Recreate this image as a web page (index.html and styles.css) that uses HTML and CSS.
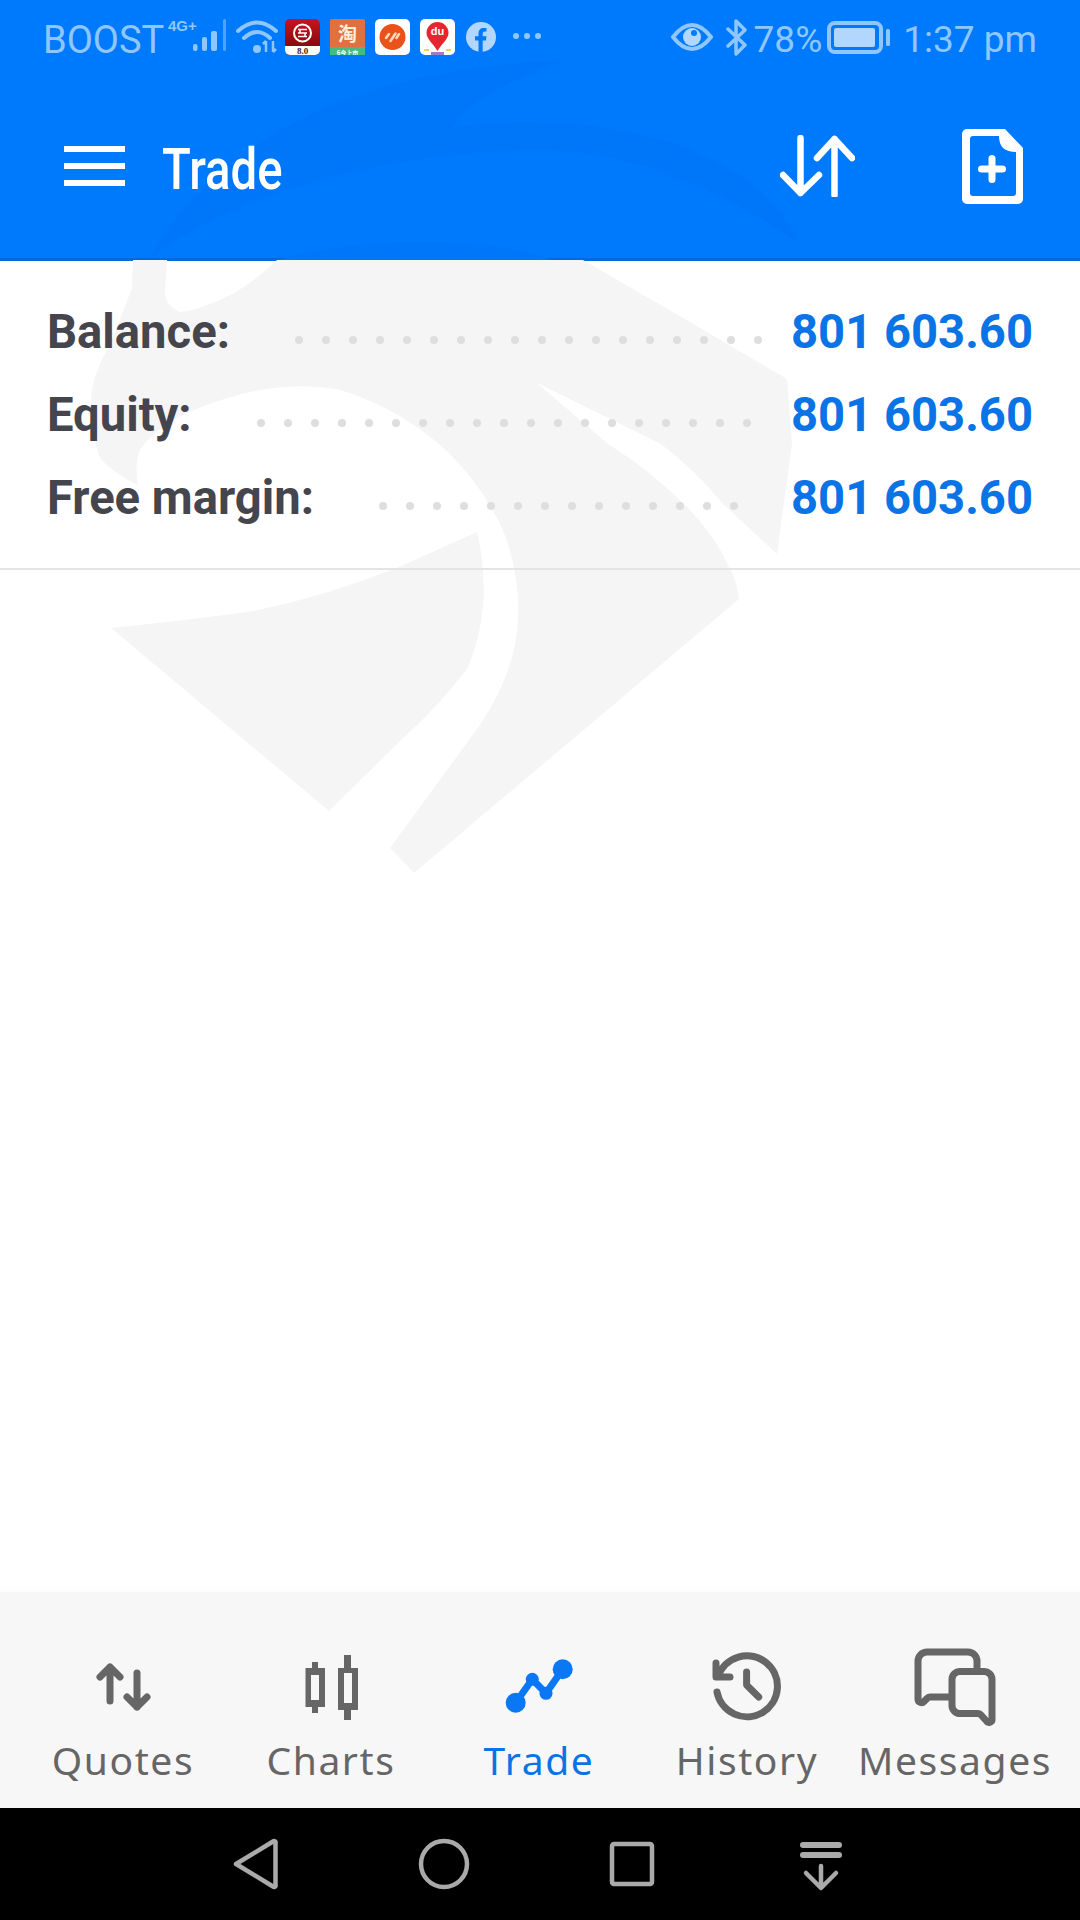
FILE: index.html
```html
<!DOCTYPE html>
<html lang="en">
<head>
<meta charset="utf-8">
<title>Trade</title>
<link rel="stylesheet" href="styles.css">
</head>
<body>
<div class="screen">
  <header class="header">
    <svg class="hdr-mark" viewBox="0 0 1080 260" aria-hidden="true">
      <path d="M150 258C190 180 290 105 420 78C470 68 520 60 560 62C500 85 465 105 452 128C560 112 690 130 760 190C780 210 795 230 800 245C740 200 640 150 540 150C400 150 240 190 150 258Z"/>
      <path d="M280 260C340 240 480 232 550 260Z"/>
    </svg>
    <div class="status">
      <div class="status-left">
        <span class="st-text st-boost">BOOST</span>
        <svg class="st-signal" viewBox="0 0 66 40">
          <text class="st-4g" x="3" y="16">4G+</text>
          <rect class="st-fill" x="28" y="29" width="4.500" height="7" rx="2"/>
          <rect class="st-fill" x="37" y="22" width="5" height="14" rx="2"/>
          <rect class="st-fill" x="46" y="16" width="6" height="20" rx="2"/>
          <rect class="st-faint" x="58" y="4" width="3" height="32" rx="1.500"/>
        </svg>
        <svg class="st-wifi" viewBox="0 0 41 33">
          <path class="st-line" d="M1 11Q20-6 39 11M7 18Q20 6 33 18"/>
          <circle class="st-fill" cx="20" cy="29" r="4"/>
          <path class="st-thin" d="M29 21v11M26 24l3-3M36 21v11M39 29l-3 3"/>
        </svg>
        <svg class="app" viewBox="0 0 35 36">
          <defs><linearGradient id="redg" x1="0" y1="0" x2="0" y2="1"><stop offset="0" stop-color="#c8141e"/><stop offset="1" stop-color="#74050a"/></linearGradient></defs>
          <rect width="35" height="36" rx="5" fill="url(#redg)"/>
          <path class="app-white" d="M0 27H35V31a5 5 0 0 1-5 5H5a5 5 0 0 1-5-5Z"/>
          <circle class="app-ring" cx="17.500" cy="14" r="8.500"/>
          <path class="app-ring-thin" d="M13 10.500h9M13 14h9M13 17.500h9M15 10.500v3.500M20 14v3.500"/>
          <text class="app-80" x="17.500" y="35">8.0</text>
        </svg>
        <svg class="app" viewBox="0 0 35 36">
          <rect width="35" height="36" rx="2" fill="#e0703f"/>
          <rect y="28" width="35" height="8" fill="#45bb7c"/>
          <text class="app-tao" x="17.500" y="22">淘</text>
          <text class="app-tao-sub" x="17.500" y="35.500">6今上市</text>
        </svg>
        <svg class="app" viewBox="0 0 35 36">
          <rect width="35" height="36" rx="5" fill="#fff"/>
          <circle cx="17.500" cy="18" r="13" fill="#e9531a"/>
          <path class="app-slash" d="M11 19l3-4M15.500 22l5-7.500M21.500 19l2.500-4"/>
        </svg>
        <svg class="app" viewBox="0 0 35 36">
          <rect width="35" height="36" rx="5" fill="#fff"/>
          <path d="M17.500 3a11 11 0 0 1 11 11c0 6-7 11-11 18c-4-7-11-12-11-18a11 11 0 0 1 11-11Z" fill="#e5262e"/>
          <text class="app-du" x="17.500" y="16">du</text>
          <path d="M11 33h13v3H11Z" fill="#9b7fc0"/>
          <path d="M26 30h5v2h-5ZM4 30h5v2H4Z" fill="#f2d35a"/>
        </svg>
        <svg class="st-fb" viewBox="0 0 30 30">
          <circle class="st-light" cx="15" cy="15" r="15"/>
          <path class="st-cut" d="M12.500 30V18.500H9v-4.200h3.500v-3c0-3.500 2-5.400 5.200-5.400 1.500 0 2.800.2 2.800.2v3.400h-1.600c-1.700 0-2.200 1-2.200 2.100v2.700h3.800l-.6 4.200h-3.200V30Z"/>
        </svg>
        <span class="st-dots"><i></i><i></i><i></i></span>
      </div>
      <div class="status-right">
        <svg class="st-eye" viewBox="0 0 42 28">
          <path class="st-line" d="M2 14C9 5 15 2 21 2s12 3 19 12c-7 9-13 12-19 12S9 23 2 14Z"/>
          <circle class="st-light" cx="21" cy="14" r="9"/>
          <circle class="st-cut" cx="23" cy="10" r="3"/>
        </svg>
        <svg class="st-bt" viewBox="0 0 23 37">
          <path class="st-line-bt" d="M3 10L20 26L11 35V2L20 11L3 27"/>
        </svg>
        <span class="st-text st-pct">78%</span>
        <svg class="st-batt" viewBox="0 0 63 33">
          <rect class="st-line" x="2" y="2" width="52" height="29" rx="6"/>
          <rect class="st-light" x="7" y="7" width="41" height="19" rx="2"/>
          <rect class="st-fill" x="59" y="8" width="4" height="17" rx="1.500"/>
        </svg>
        <span class="st-text st-time">1:37 pm</span>
      </div>
    </div>
    <div class="toolbar">
      <div class="burger"><i></i><i></i><i></i></div>
      <h1 class="title">Trade</h1>
      <div class="tool-actions">
        <svg class="ic-swap" viewBox="0 0 75 62">
          <path d="M20.500 3V58M3 40L20.500 58L39 40M54.500 60V4M37 23L54.500 4L72 23"/>
        </svg>
        <svg class="ic-doc" viewBox="0 0 61 75">
          <path class="doc-body" fill-rule="evenodd" d="M5 0H43L61 19V70a5 5 0 0 1-5 5H5a5 5 0 0 1-5-5V5a5 5 0 0 1 5-5ZM11 7a3 3 0 0 0-3 3V64a3 3 0 0 0 3 3H51a3 3 0 0 0 3-3V23C43 23 37 18 37 7Z"/>
          <path class="doc-plus" d="M30 29.500V50.500M19.500 40H40.500"/>
        </svg>
      </div>
    </div>
  </header>

  <main class="main">
    <svg class="mark" viewBox="0 260 1080 640" aria-hidden="true">
      <path d="M133 260L132 288Q120 320 110 345Q92 375 91 400Q91 435 100 458Q115 475 138 485Q134 465 140 450Q165 412 254 391Q300 382 340 390Q400 408 448 452Q490 495 506 538Q520 580 518 620Q516 670 480 725L390 848L414 873L739 599Q737 580 729 567Q715 535 685 505Q650 470 608 444L537 383L661 444Q695 470 724 505L777 554L792 444L787 379L690 322L583 260L277 260Q250 285 230 295Q200 310 180 312Q165 305 165 292L167 260Z"/>
      <path d="M111 628Q190 620 254 611Q330 595 399 567L477 532Q486 570 483 607Q480 640 467 669Q440 705 399 742L329 811Z"/>
    </svg>
    <section class="summary">
      <div class="row">
        <span class="label">Balance:</span>
        <span class="dots"><i></i><i></i><i></i><i></i><i></i><i></i><i></i><i></i><i></i><i></i><i></i><i></i><i></i><i></i><i></i><i></i><i></i><i></i></span>
        <span class="value">801 603.60</span>
      </div>
      <div class="row">
        <span class="label">Equity:</span>
        <span class="dots"><i></i><i></i><i></i><i></i><i></i><i></i><i></i><i></i><i></i><i></i><i></i><i></i><i></i><i></i><i></i><i></i><i></i><i></i><i></i></span>
        <span class="value">801 603.60</span>
      </div>
      <div class="row">
        <span class="label">Free margin:</span>
        <span class="dots"><i></i><i></i><i></i><i></i><i></i><i></i><i></i><i></i><i></i><i></i><i></i><i></i><i></i><i></i></span>
        <span class="value">801 603.60</span>
      </div>
    </section>
  </main>

  <nav class="tabs">
    <div class="tab">
      <svg class="tab-ic stroke" viewBox="0 0 100 80"><path d="M37 54V20M27 30L37 20L47 30M64 26V60M54 50L64 60L74 50"/></svg>
      <span class="tab-label">Quotes</span>
    </div>
    <div class="tab">
      <svg class="tab-ic solid" viewBox="0 0 100 80"><path fill-rule="evenodd" d="M31 15H37V21H44V60H37V66H31V60H24.500V21H31ZM30 28V53H38V28ZM63 8H70V21H77V63H70V73H63V63H57V21H63ZM63 26V56H71V26Z"/></svg>
      <span class="tab-label">Charts</span>
    </div>
    <div class="tab active">
      <svg class="tab-ic trade" viewBox="0 0 100 80">
        <path class="trade-line" d="M26.700 55.700L43.300 32.300L57 46.300L73.700 22.300"/>
        <circle cx="26.700" cy="55.700" r="10"/><circle cx="43.300" cy="32.300" r="6.500"/><circle cx="57" cy="46.300" r="6.500"/><circle cx="73.700" cy="22.300" r="10"/>
      </svg>
      <span class="tab-label">Trade</span>
    </div>
    <div class="tab">
      <svg class="tab-ic stroke" viewBox="0 0 100 80"><path d="M20 45A30.500 30.500 0 1 0 21 29.700M19 16V30H33M49.600 25V38L61.700 50"/></svg>
      <span class="tab-label">History</span>
    </div>
    <div class="tab">
      <svg class="tab-ic stroke" viewBox="0 0 100 80"><path d="M72 20V14a9 9 0 0 0-9-9H22a9 9 0 0 0-9 9V52a3.500 3.500 0 0 0 6 2.500l3-3a4 4 0 0 1 3-1.500H45M55 24.500H79a8 8 0 0 1 8 8V72a3 3 0 0 1-5.500 2L76 68a4 4 0 0 0-3-1.500H55a8 8 0 0 1-8-8V32.500a8 8 0 0 1 8-8Z"/></svg>
      <span class="tab-label">Messages</span>
    </div>
  </nav>

  <footer class="sysnav">
    <svg class="nav-ic" viewBox="0 0 60 60"><path d="M11 30L48 7.500a1.500 1.500 0 0 1 2.500 1.500V51a1.500 1.500 0 0 1-2.500 1.500Z"/></svg>
    <svg class="nav-ic" viewBox="0 0 60 60"><circle cx="30" cy="30" r="23"/></svg>
    <svg class="nav-ic" viewBox="0 0 60 60"><rect x="10" y="10" width="40" height="40" rx="2"/></svg>
    <svg class="nav-ic" viewBox="0 0 60 60"><path class="nav-bar" d="M12 11H48M12 21H48"/><path d="M30 32V53M15 39L30 54L45 39"/></svg>
  </footer>
</div>
</body>
</html>
```
FILE: styles.css
```css
* { box-sizing: border-box; }
html, body { margin: 0; padding: 0; }
body { font-family: Roboto, "Noto Sans", sans-serif; background: #fff; }

.screen {
  width: 1080px;
  height: 1920px;
  display: flex;
  flex-direction: column;
  overflow: hidden;
  background: #fff;
}

/* Header */
.header {
  position: relative;
  height: 261px;
  flex: none;
  background: #007afc;
  border-bottom: 3px solid #0569d8;
  display: flex;
  flex-direction: column;
}
.hdr-mark {
  position: absolute;
  left: 0;
  top: 0;
  width: 1080px;
  height: 260px;
  fill: #0077f8;
}
.status {
  position: relative;
  height: 74px;
  flex: none;
  display: flex;
  justify-content: space-between;
  align-items: center;
  padding: 0 43px 0 43px;
  color: #8fc7fd;
}
.status-left, .status-right { display: flex; align-items: center; }
.st-text { font-size: 37px; line-height: 40px; color: #8fc7fd; margin-top: 5px; }
.st-boost { font-size: 38px; }
.st-signal { width: 66px; height: 40px; margin-left: 1px; margin-top: -4px; }
.st-4g { font: 700 15px "Liberation Sans", sans-serif; fill: #8fc7fd; }
.st-fill { fill: #8fc7fd; }
.st-faint { fill: #4ea3fb; }
.st-light { fill: #b3d6fd; }
.st-cut { fill: #007afc; }
.st-line { fill: none; stroke: #8fc7fd; stroke-width: 4; stroke-linecap: round; }
.st-line-bt { fill: none; stroke: #8fc7fd; stroke-width: 3.500; stroke-linejoin: round; stroke-linecap: round; }
.st-thin { fill: none; stroke: #8fc7fd; stroke-width: 2.500; }
.st-wifi { width: 41px; height: 33px; margin-left: 6px; margin-top: -1px; overflow: visible; }
.app { width: 35px; height: 36px; margin-left: 10px; flex: none; }
.st-wifi + .app { margin-left: 7px; }
.app-white { fill: #fff; }
.app-ring { fill: none; stroke: #fff; stroke-width: 2; }
.app-ring-thin { fill: none; stroke: #fff; stroke-width: 1.500; }
.app-80 { font: 700 9px "Liberation Serif", serif; fill: #4a2020; text-anchor: middle; }
.app-tao { font: 700 19px "Noto Sans CJK SC", sans-serif; fill: #fdeedd; text-anchor: middle; }
.app-tao-sub { font: 700 6px "Noto Sans CJK SC", sans-serif; fill: #fff; text-anchor: middle; }
.app-slash { fill: none; stroke: #fbd9bd; stroke-width: 2.500; stroke-linecap: round; }
.app-du { font: 700 11px "Liberation Sans", sans-serif; fill: #fff; text-anchor: middle; }
.st-fb { width: 30px; height: 30px; margin-left: 11px; }
.st-dots { display: flex; gap: 5px; margin-left: 17px; margin-top: -2px; }
.st-dots i { width: 6px; height: 6px; border-radius: 50%; background: #8fc7fd; }
.st-eye { width: 42px; height: 28px; }
.st-bt { width: 23px; height: 37px; margin-left: 12px; }
.st-pct { margin-left: 6px; white-space: nowrap; }
.st-batt { width: 63px; height: 33px; margin-left: 5px; }
.st-time { margin-left: 13px; white-space: nowrap; }

.toolbar {
  position: relative;
  flex: 1;
  display: flex;
  align-items: center;
  padding: 0 57px 0 64px;
  color: #fff;
}
.burger { width: 61px; height: 40px; display: flex; flex-direction: column; justify-content: space-between; }
.burger i { display: block; height: 6px; background: #fff; }
.title {
  margin: 8px 0 0 37px;
  font-size: 57px;
  line-height: 64px;
  font-weight: 500;
  transform: scaleX(0.83);
  transform-origin: left center;
  color: #fff;
}
.tool-actions { margin-left: auto; display: flex; align-items: center; gap: 107px; }
.ic-swap { width: 75px; height: 62px; fill: none; stroke: #fff; stroke-width: 6.500; stroke-linecap: round; stroke-linejoin: round; }
.ic-doc { width: 61px; height: 75px; }
.doc-body { fill: #fff; }
.doc-plus { fill: none; stroke: #fff; stroke-width: 7; stroke-linecap: round; }

/* Main */
.main { position: relative; flex: 1; min-height: 0; }
.mark {
  position: absolute;
  left: 0;
  top: -1px;
  width: 1080px;
  height: 640px;
  fill: #f5f5f6;
}
.summary {
  position: relative;
  padding: 29px 47px 27px;
  height: 309px;
  border-bottom: 2px solid #e4e4e4;
}
.row { display: flex; align-items: center; height: 83px; }
.label { font-size: 47.200px; line-height: 54px; font-weight: 700; color: #45454d; white-space: nowrap; }
.dots { display: flex; gap: 19px; margin-left: 65px; margin-top: 16px; }
.dots i { width: 8px; height: 8px; border-radius: 50%; background: #dedede; }
.value { margin-left: auto; font-size: 47.200px; line-height: 54px; font-weight: 700; color: #0a74e6; white-space: nowrap; }

/* Tabs */
.tabs {
  flex: none;
  position: relative;
  height: 216px;
  padding: 55px 21px 0 19px;
  display: grid;
  grid-template-columns: repeat(5, 208px);
  background: #f7f7f7;
  box-shadow: 0 -4px 8px rgba(0, 0, 0, 0.012);
}
.tab { display: flex; flex-direction: column; align-items: center; }
.tab-ic { width: 100px; height: 80px; flex: none; }
.tab-ic.stroke { fill: none; stroke: #666; stroke-width: 7; stroke-linecap: round; stroke-linejoin: round; }
.tab-ic.solid { fill: #666; }
.tab-ic.trade { fill: #0a78f5; }
.trade-line { fill: none; stroke: #0a78f5; stroke-width: 7; stroke-linejoin: round; }
.tab-label {
  margin-top: 8px;
  font-family: "Noto Sans", sans-serif;
  font-size: 39px;
  line-height: 50px;
  letter-spacing: 1.600px;
  color: #666;
  white-space: nowrap;
}
.active .tab-label { color: #0a74e6; }

/* System nav */
.sysnav {
  flex: none;
  height: 112px;
  background: #000;
  display: flex;
  justify-content: center;
  align-items: center;
  gap: 128.670px;
  padding-right: 4px;
}
.nav-ic { width: 60px; height: 60px; fill: none; stroke: #aaa; stroke-width: 4.500; stroke-linejoin: round; stroke-linecap: round; }
.nav-bar { stroke-width: 6; }
```
